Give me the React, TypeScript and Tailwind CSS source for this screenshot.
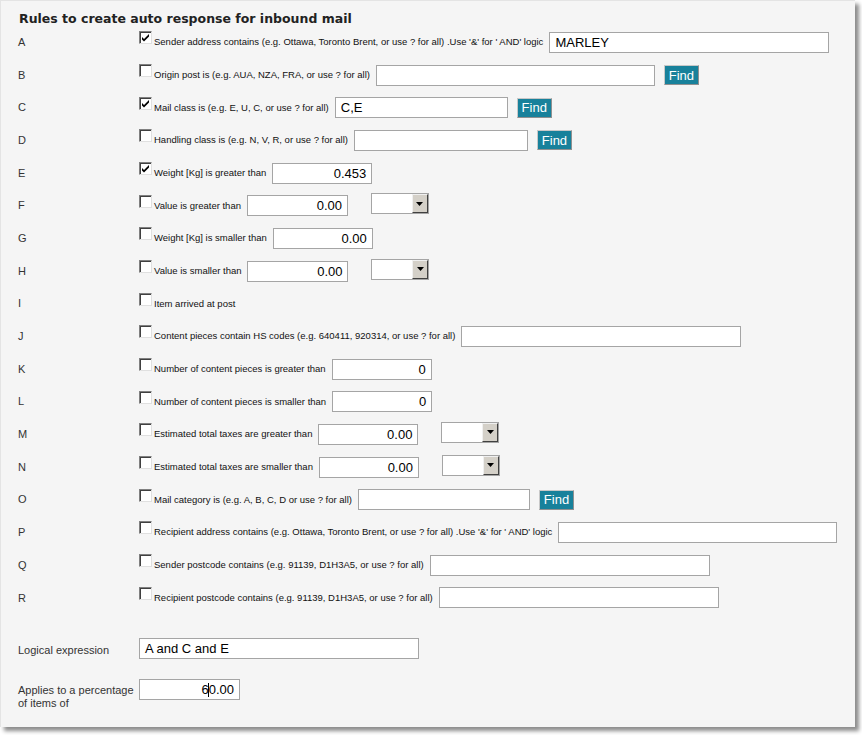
import React from 'react';

type Field =
  | { kind: 'text'; w: number; value?: string; align?: 'left' | 'right' }
  | { kind: 'find' }
  | { kind: 'select' };

interface Rule {
  letter: string;
  label: string;
  checked?: boolean;
  fields: Field[];
}

const rules: Rule[] = [
  { letter: 'A', checked: true, label: "Sender address contains (e.g. Ottawa, Toronto Brent, or use ? for all) .Use '&' for ' AND' logic", fields: [{ kind: 'text', w: 280, value: 'MARLEY' }] },
  { letter: 'B', label: 'Origin post is (e.g. AUA, NZA, FRA, or use ? for all)', fields: [{ kind: 'text', w: 279 }, { kind: 'find' }] },
  { letter: 'C', checked: true, label: 'Mail class is (e.g. E, U, C, or use ? for all)', fields: [{ kind: 'text', w: 173, value: 'C,E' }, { kind: 'find' }] },
  { letter: 'D', label: 'Handling class is (e.g. N, V, R, or use ? for all)', fields: [{ kind: 'text', w: 174 }, { kind: 'find' }] },
  { letter: 'E', checked: true, label: 'Weight  [Kg] is greater than', fields: [{ kind: 'text', w: 100, value: '0.453', align: 'right' }] },
  { letter: 'F', label: 'Value is greater than', fields: [{ kind: 'text', w: 101, value: '0.00', align: 'right' }, { kind: 'select' }] },
  { letter: 'G', label: 'Weight  [Kg] is smaller than', fields: [{ kind: 'text', w: 100, value: '0.00', align: 'right' }] },
  { letter: 'H', label: 'Value is smaller than', fields: [{ kind: 'text', w: 101, value: '0.00', align: 'right' }, { kind: 'select' }] },
  { letter: 'I', label: 'Item arrived at post', fields: [] },
  { letter: 'J', label: 'Content pieces contain HS codes (e.g. 640411, 920314, or use ? for all)', fields: [{ kind: 'text', w: 280 }] },
  { letter: 'K', label: 'Number of content pieces is greater than', fields: [{ kind: 'text', w: 100, value: '0', align: 'right' }] },
  { letter: 'L', label: 'Number of content pieces is smaller than', fields: [{ kind: 'text', w: 100, value: '0', align: 'right' }] },
  { letter: 'M', label: 'Estimated total taxes are greater than', fields: [{ kind: 'text', w: 100, value: '0.00', align: 'right' }, { kind: 'select' }] },
  { letter: 'N', label: 'Estimated total taxes are smaller than', fields: [{ kind: 'text', w: 100, value: '0.00', align: 'right' }, { kind: 'select' }] },
  { letter: 'O', label: 'Mail category is (e.g. A, B, C, D or use ? for all)', fields: [{ kind: 'text', w: 172 }, { kind: 'find' }] },
  { letter: 'P', label: "Recipient address contains (e.g. Ottawa, Toronto Brent, or use ? for all) .Use '&' for ' AND' logic", fields: [{ kind: 'text', w: 279 }] },
  { letter: 'Q', label: 'Sender postcode contains (e.g. 91139, D1H3A5, or use ? for all)', fields: [{ kind: 'text', w: 280 }] },
  { letter: 'R', label: 'Recipient postcode contains (e.g. 91139, D1H3A5, or use ? for all)', fields: [{ kind: 'text', w: 280 }] },
];

const Checkbox: React.FC<{ checked?: boolean }> = ({ checked }) => (
  <span className="-mt-[9px] flex h-[13px] w-[13px] shrink-0 items-center justify-center border-t border-l border-t-[#808080] border-l-[#808080] border-r border-b border-r-[#e0e0e0] border-b-[#e0e0e0] bg-white shadow-[inset_1px_1px_0_#404040]">
    {checked && (
      <svg width="9" height="9" viewBox="0 0 9 9">
        <path d="M1 4 L3 6 L8 1 L8 3.5 L3 8.5 L1 6.5 Z" fill="#000" />
      </svg>
    )}
  </span>
);

const TextBox: React.FC<{ w: number; value?: string; align?: 'left' | 'right' }> = ({ w, value, align }) => (
  <div
    className={`flex h-[21px] items-center border border-[#a5a5a5] bg-white px-[5px] text-[13px] leading-none text-black ${align === 'right' ? 'justify-end' : 'justify-start'}`}
    style={{ width: w }}
  >
    {value}
  </div>
);

const FindButton = () => (
  <div className="ml-[9px] flex h-[20px] w-[35px] items-center justify-center border border-t-[#c8c8c8] border-l-[#c8c8c8] border-r-[#909090] border-b-[#909090] bg-[#18819b] text-[13px] leading-none text-white">
    Find
  </div>
);

const SelectBox = () => (
  <div className="-mt-[4px] ml-[23px] flex h-[21px] w-[58px] border border-[#a5a5a5] bg-white">
    <div className="flex-1" />
    <div className="flex w-[16px] items-center justify-center border border-t-[#f0f0f0] border-l-[#f0f0f0] border-r-[#404040] border-b-[#404040] bg-[#d4d0c8]">
      <svg width="7" height="4" viewBox="0 0 7 4">
        <path d="M0 0 H7 L3.5 4 Z" fill="#000" />
      </svg>
    </div>
  </div>
);

export default function App() {
  return (
    <div className="h-[735px] w-[862px] bg-white font-['Liberation_Sans',Arial,sans-serif]">
      <div className="h-[727px] w-[855px] border-t border-l border-[#e4e4e4] bg-[#f5f5f5] shadow-[4px_4px_4px_rgba(0,0,0,0.45)]">
        <h1 className="pl-[18px] pt-[11px] font-['DejaVu_Sans',Verdana,sans-serif] text-[12.5px] font-bold leading-[14px] text-[#222]">
          Rules to create auto response for inbound mail
        </h1>
        <div className="flex flex-col">
          {rules.map((r) => (
            <div key={r.letter} className="flex h-[32.68px] items-center">
              <div className="w-[138px] pl-[17px] text-[11px] text-[#333]">{r.letter}</div>
              <Checkbox checked={r.checked} />
              <span className="ml-[2px] mr-[6px] whitespace-nowrap text-[9.5px] text-[#111]">{r.label}</span>
              {r.fields.map((f, i) =>
                f.kind === 'text' ? (
                  <TextBox key={i} w={f.w} value={f.value} align={f.align} />
                ) : f.kind === 'find' ? (
                  <FindButton key={i} />
                ) : (
                  <SelectBox key={i} />
                )
              )}
            </div>
          ))}
        </div>
        <div className="mt-[24px] flex items-center">
          <div className="w-[138px] pl-[17px] pt-[4px] text-[11px] text-[#333]">Logical expression</div>
          <TextBox w={280} value="A and C and E" />
        </div>
        <div className="mt-[20px] flex items-start">
          <div className="w-[138px] pl-[17px] pt-[5px] text-[11px] leading-[13px] text-[#333]">
            Applies to a percentage of items of
          </div>
          <div className="flex h-[21px] w-[101px] items-center justify-end border border-[#a5a5a5] bg-white px-[5px] text-[13px] leading-none text-black">
            6<span className="-ml-[1px] h-[14px] w-px bg-black" />0.00
          </div>
        </div>
      </div>
    </div>
  );
}
